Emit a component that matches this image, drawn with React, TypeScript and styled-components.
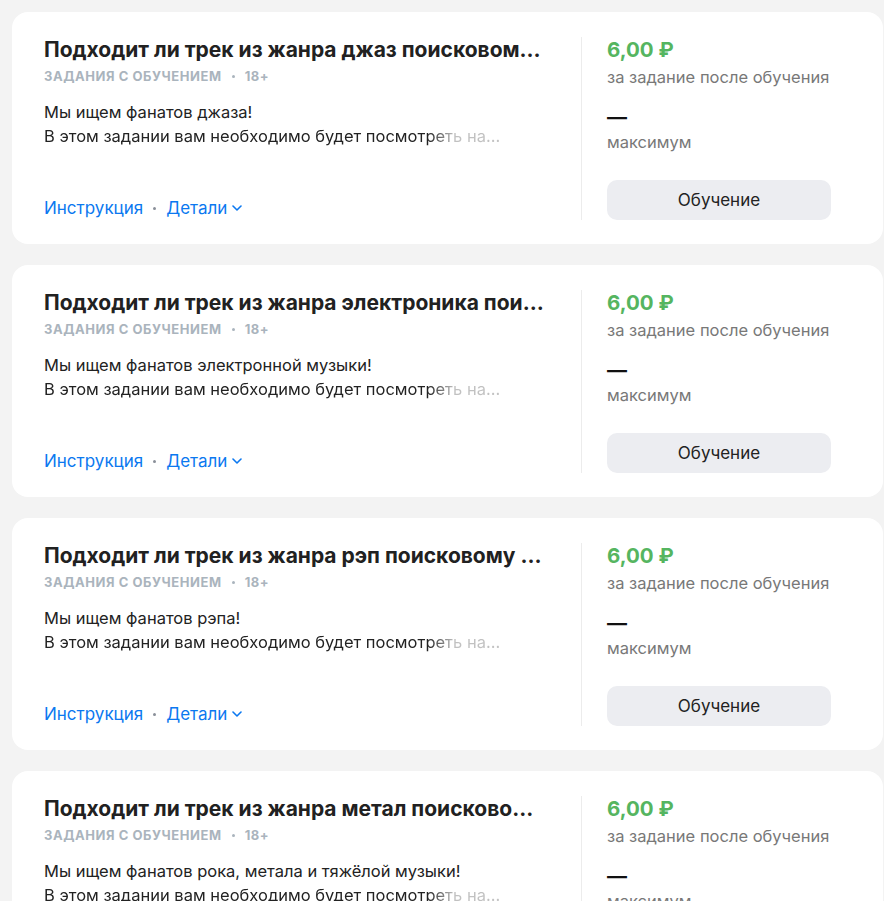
import React from 'react';
import styled, { createGlobalStyle } from 'styled-components';

const GlobalStyle = createGlobalStyle`
  html, body {
    margin: 0;
    padding: 0;
    background: #f3f3f3;
    overflow: hidden;
  }
  body {
    font-family: Inter, "Noto Sans", "Liberation Sans", sans-serif;
    -webkit-font-smoothing: antialiased;
  }
`;

const List = styled.div`
  display: flex;
  flex-direction: column;
  gap: 21px;
  padding: 12px 0 0 12px;
`;

const Card = styled.div`
  display: flex;
  width: 871px;
  box-sizing: border-box;
  padding: 25px 0 24px 32px;
  background: #fff;
  border-radius: 16px;
`;

const Main = styled.div`
  flex: 1;
  min-width: 0;
  display: flex;
  flex-direction: column;
  padding-right: 24px;
`;

const Title = styled.div`
  max-width: 500px;
  font-size: 21px;
  line-height: 26px;
  font-weight: 700;
  color: #212121;
  white-space: nowrap;
  overflow: hidden;
  text-overflow: ellipsis;
`;

const Meta = styled.div`
  display: flex;
  align-items: center;
  margin-top: 4px;
  font-size: 13px;
  line-height: 18px;
  font-weight: 700;
  text-transform: uppercase;
  color: #aab4bd;
  letter-spacing: 0.55px;
`;

const Dot = styled.span`
  width: 3px;
  height: 3px;
  border-radius: 50%;
  background: currentColor;
  margin: 0 10px;
`;

const Description = styled.div`
  margin-top: 15px;
  font-size: 16.5px;
  line-height: 24px;
  color: #222;
`;

const FadedLine = styled.div`
  display: inline-block;
  -webkit-mask-image: linear-gradient(to right, #000 calc(100% - 72px), rgba(0, 0, 0, 0.28) calc(100% - 46px));
  mask-image: linear-gradient(to right, #000 calc(100% - 72px), rgba(0, 0, 0, 0.28) calc(100% - 46px));
`;

const Links = styled.div`
  margin-top: auto;
  display: flex;
  align-items: center;
  font-size: 17px;
  line-height: 24px;
  color: #0b78f0;
`;

const LinkDot = styled.span`
  width: 3px;
  height: 3px;
  border-radius: 50%;
  background: #8a8f99;
  margin: 0 10px;
`;

const DetailsLink = styled.span`
  display: inline-flex;
  align-items: center;
  gap: 5px;
`;

const Side = styled.div`
  width: 250px;
  flex-shrink: 0;
  box-sizing: border-box;
  padding-left: 25px;
  border-left: 1px solid #ececec;
  margin-right: 52px;
  display: flex;
  flex-direction: column;
`;

const Price = styled.div`
  font-size: 20.5px;
  line-height: 26px;
  font-weight: 700;
  color: #55b560;
`;

const SideLabel = styled.div<{ $gap: number }>`
  margin-top: ${({ $gap }) => $gap}px;
  font-size: 16.5px;
  line-height: 24px;
  color: #787878;
  white-space: nowrap;
`;

const Dash = styled.div`
  margin-top: 16px;
  font-size: 20px;
  line-height: 24px;
  font-weight: 700;
  color: #111;
`;

const Button = styled.button`
  margin-top: 26px;
  width: 224px;
  height: 40px;
  border: none;
  border-radius: 10px;
  background: #ecedf1;
  font-family: inherit;
  font-size: 17px;
  color: #222;
  cursor: pointer;
`;

const Chevron = () => (
  <svg width="10" height="6" viewBox="0 0 10 6" fill="none">
    <path d="M1 1l4 4 4-4" stroke="currentColor" strokeWidth="1.6" strokeLinecap="round" strokeLinejoin="round" />
  </svg>
);

const tasks = [
  { genre: 'джаз', intro: 'Мы ищем фанатов джаза!' },
  { genre: 'электроника', intro: 'Мы ищем фанатов электронной музыки!' },
  { genre: 'рэп', intro: 'Мы ищем фанатов рэпа!' },
  { genre: 'метал', intro: 'Мы ищем фанатов рока, метала и тяжёлой музыки!' },
];

const TaskCard = ({ genre, intro }: { genre: string; intro: string }) => (
  <Card>
    <Main>
      <Title>{`Подходит ли трек из жанра ${genre} поисковому запросу?`}</Title>
      <Meta>
        Задания с обучением
        <Dot />
        18+
      </Meta>
      <Description>
        <div>{intro}</div>
        <FadedLine>В этом задании вам необходимо будет посмотреть на...</FadedLine>
      </Description>
      <Links>
        <span>Инструкция</span>
        <LinkDot />
        <DetailsLink>
          Детали <Chevron />
        </DetailsLink>
      </Links>
    </Main>
    <Side>
      <Price>6,00 ₽</Price>
      <SideLabel $gap={2}>за задание после обучения</SideLabel>
      <Dash>—</Dash>
      <SideLabel $gap={1}>максимум</SideLabel>
      <Button>Обучение</Button>
    </Side>
  </Card>
);

export default function App() {
  return (
    <>
      <GlobalStyle />
      <List>
        {tasks.map((t) => (
          <TaskCard key={t.genre} {...t} />
        ))}
      </List>
    </>
  );
}
